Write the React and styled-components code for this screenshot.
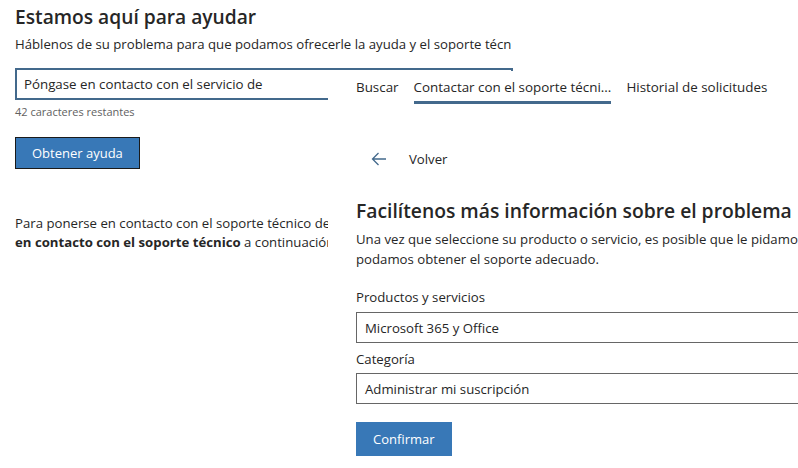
import React from 'react';
import styled, { createGlobalStyle } from 'styled-components';

const GlobalStyle = createGlobalStyle`
  html, body {
    margin: 0;
    padding: 0;
    background: #fff;
  }
  body {
    font-family: 'Open Sans', 'Noto Sans', 'Liberation Sans', sans-serif;
    color: #262626;
  }
`;

const Page = styled.div`
  position: relative;
  width: 798px;
  height: 468px;
  overflow: hidden;
  box-sizing: border-box;
  padding: 4px 0 0 15px;
`;

const LeftColumn = styled.div`
  width: 498px;
  display: flex;
  flex-direction: column;
`;

const Title = styled.h1`
  margin: 0;
  font-size: 19.2px;
  line-height: 26px;
  font-weight: 600;
  color: #262626;
`;

const Subtitle = styled.p`
  margin: 4px 0 0;
  font-size: 13.2px;
  line-height: 20px;
  white-space: nowrap;
  overflow: hidden;
`;

const SearchInput = styled.div`
  margin-top: 14px;
  height: 32px;
  box-sizing: border-box;
  border: 2px solid #43698c;
  display: flex;
  align-items: center;
  padding: 0 7px;
  font-size: 13.3px;
  color: #262626;
`;

const Helper = styled.div`
  margin-top: 4px;
  font-size: 11px;
  line-height: 16px;
  color: #616161;
`;

const Button = styled.button`
  align-self: flex-start;
  margin-top: ${(p) => p.$top || 0}px;
  height: ${(p) => p.$h || 32}px;
  padding: 0 ${(p) => p.$px || 16}px;
  background: #3878b7;
  color: #fff;
  border: 1px solid ${(p) => (p.$outlined ? '#1a1a1a' : '#3878b7')};
  font-family: inherit;
  font-size: 13px;
  cursor: pointer;
`;

const Paragraph = styled.p`
  margin: ${(p) => p.$top || 0}px 0 0;
  font-size: 13.2px;
  line-height: 19px;
  white-space: nowrap;
  b {
    font-weight: 700;
  }
`;

const RightPanel = styled.section`
  position: absolute;
  top: 71px;
  left: 328px;
  right: 0;
  bottom: 0;
  background: #fff;
  padding-left: 28px;
  overflow: hidden;
  display: flex;
  flex-direction: column;
`;

const Tabs = styled.nav`
  display: flex;
  gap: 15px;
`;

const Tab = styled.div`
  padding: 6px 0 4px;
  font-size: 13.4px;
  line-height: 20px;
  white-space: nowrap;
  border-bottom: 3px solid ${(p) => (p.$active ? '#43698c' : 'transparent')};
`;

const BackRow = styled.div`
  margin-top: 45px;
  padding-left: 15px;
  display: flex;
  align-items: center;
  gap: 22px;
  font-size: 13.2px;
  line-height: 20px;
`;

const Heading = styled.h2`
  margin: 30px 0 0;
  font-size: 19.3px;
  line-height: 24px;
  font-weight: 600;
  white-space: nowrap;
`;

const Description = styled.p`
  margin: 6px 0 0;
  font-size: 13.2px;
  line-height: 20px;
  white-space: nowrap;
`;

const Label = styled.label`
  margin-top: ${(p) => p.$top}px;
  font-size: 13.2px;
  line-height: 20px;
`;

const Select = styled.div`
  margin-top: ${(p) => p.$top}px;
  width: 470px;
  height: 31px;
  box-sizing: border-box;
  border: 1px solid #666;
  display: flex;
  align-items: center;
  padding: 0 8px;
  font-size: 13.2px;
`;

const ArrowLeft = () => (
  <svg width="16" height="14" viewBox="0 0 16 14" fill="none">
    <path d="M15 7H1.5M7.5 1L1.5 7l6 6" stroke="#43698c" strokeWidth="1.3" />
  </svg>
);

export default function App() {
  return (
    <>
      <GlobalStyle />
      <Page>
        <LeftColumn>
          <Title>Estamos aquí para ayudar</Title>
          <Subtitle>
            Háblenos de su problema para que podamos ofrecerle la ayuda y el soporte técn
          </Subtitle>
          <SearchInput>Póngase en contacto con el servicio de</SearchInput>
          <Helper>42 caracteres restantes</Helper>
          <Button $top={17} $h={32} $outlined>
            Obtener ayuda
          </Button>
          <Paragraph $top={45}>
            Para ponerse en contacto con el soporte técnico de Microsoft, seleccione <b>Ponerse</b>
          </Paragraph>
          <Paragraph>
            <b>en contacto con el soporte técnico</b> a continuación.
          </Paragraph>
        </LeftColumn>

        <RightPanel>
          <Tabs>
            <Tab>Buscar</Tab>
            <Tab $active>Contactar con el soporte técni...</Tab>
            <Tab>Historial de solicitudes</Tab>
          </Tabs>
          <BackRow>
            <ArrowLeft />
            <span>Volver</span>
          </BackRow>
          <Heading>Facilítenos más información sobre el problema</Heading>
          <Description>
            Una vez que seleccione su producto o servicio, es posible que le pidamos más detalles para que
            <br />
            podamos obtener el soporte adecuado.
          </Description>
          <Label $top={18}>Productos y servicios</Label>
          <Select $top={5}>Microsoft 365 y Office</Select>
          <Label $top={6}>Categoría</Label>
          <Select $top={4}>Administrar mi suscripción</Select>
          <Button $top={18} $h={34} $px={16}>
            Confirmar
          </Button>
        </RightPanel>
      </Page>
    </>
  );
}
